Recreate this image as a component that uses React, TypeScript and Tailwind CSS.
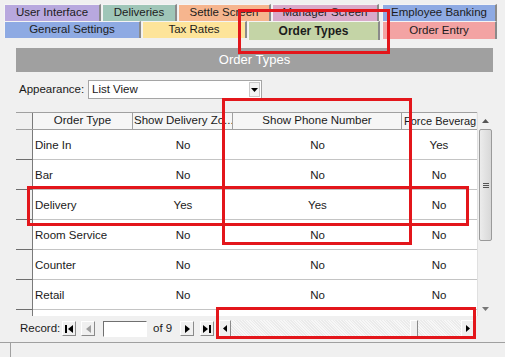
const font = { fontFamily: "'Liberation Sans', Arial, sans-serif" }

const Tab = ({ label, w, bg, ml, bold, h }: { label: string; w: string; bg: string; ml: string; bold?: boolean; h: string }) => (
  <div className={`${w} ${bg} ${ml} ${h} flex items-center justify-center border-t border-l border-t-[#f4f4f4] border-l-[#f4f4f4] border-r-2 border-r-[#8a8a8a] text-[11.5px] text-[#1c1c1c] ${bold ? "font-bold text-[12px]" : ""}`}>
    {label}
  </div>
)

const rows = [
  ["Dine In", "No", "No", "Yes"],
  ["Bar", "No", "No", "No"],
  ["Delivery", "Yes", "Yes", "No"],
  ["Room Service", "No", "No", "No"],
  ["Counter", "No", "No", "No"],
  ["Retail", "No", "No", "No"],
]

const NavBtn = ({ children, off }: { children: React.ReactNode; off?: boolean }) => (
  <div className={`w-[14px] h-[15px] flex items-center justify-center bg-[#f0f0f0] border border-t-white border-l-white border-r-[#8a8a8a] border-b-[#8a8a8a] ${off ? "text-[#a0a0a0]" : "text-black"}`}>
    {children}
  </div>
)

const App = () => {
  return (
    <div className="relative w-[505px] h-[357px] bg-[#f0f0f0] overflow-hidden text-[#1a1a1a]" style={font}>
      {/* tabs */}
      <div className="pt-[4px] pl-[4px]">
        <div className="flex">
          <Tab label="User Interface" w="w-[97px]" bg="bg-[#b8a8de]" ml="ml-0" h="h-[17px]" />
          <Tab label="Deliveries" w="w-[75px]" bg="bg-[#9fc6b8]" ml="ml-[1px]" h="h-[17px]" />
          <Tab label="Settle Screen" w="w-[93px]" bg="bg-[#f6b58e]" ml="ml-[1px]" h="h-[17px]" />
          <Tab label="Manager Screen" w="w-[107px]" bg="bg-[#d9a9c9]" ml="ml-[1px]" h="h-[17px]" />
          <Tab label="Employee Banking" w="w-[115px]" bg="bg-[#8eaae3]" ml="ml-[3px]" h="h-[17px]" />
        </div>
        <div className="flex items-start">
          <Tab label="General Settings" w="w-[137px]" bg="bg-[#8eaae3]" ml="ml-0" h="h-[17px]" />
          <Tab label="Tax Rates" w="w-[105px]" bg="bg-[#fde49a]" ml="ml-[1px]" h="h-[17px]" />
          <Tab label="Order Types" w="w-[132px]" bg="bg-[#c4d4a6]" ml="ml-[1px]" h="h-[19px]" bold />
          <Tab label="Order Entry" w="w-[115px]" bg="bg-[#f3a3a3]" ml="ml-[2px]" h="h-[18px]" />
        </div>
      </div>

      {/* title band */}
      <div className="mt-[8px] ml-[16px] w-[477px] h-[24px] bg-[#a0a0a0] flex items-center justify-center text-white text-[13px]">
        Order Types
      </div>

      {/* appearance */}
      <div className="mt-[8px] h-[19px] flex items-center pl-[19px]">
        <span className="text-[11.5px] w-[69px]">Appearance:</span>
        <div className="w-[174px] h-[19px] bg-white border border-[#a5a5a5] flex items-center">
          <span className="flex-1 pl-[3px] text-[11.5px]">List View</span>
          <div className="w-[11px] h-[15px] mr-[1px] border border-[#c8c8c8] bg-[#f3f3f3] flex items-center justify-center">
            <svg width="7" height="4" viewBox="0 0 7 4"><path d="M0 0h7L3.5 4z" fill="#000" /></svg>
          </div>
        </div>
      </div>

      {/* grid */}
      <div className="mt-[13px] ml-[16px] w-[477px] h-[204px] flex">
        <div className="w-[461px] flex flex-col border-t border-[#a0a0a0]">
          <div className="flex h-[17px] border-b border-[#a0a0a0] text-[11.5px]">
            <div className="w-[17px] border-r border-[#7a7a7a]" />
            <div className="w-[100px] bg-[#f6f6f6] border-r border-[#a0a0a0] flex items-center justify-center">Order Type</div>
            <div className="w-[100px] bg-[#f6f6f6] border-r border-[#a0a0a0] flex items-center pl-[1px] overflow-hidden whitespace-nowrap">Show Delivery Zo...</div>
            <div className="w-[169px] bg-[#f6f6f6] border-r border-[#a0a0a0] flex items-center justify-center">Show Phone Number</div>
            <div className="w-[74px] bg-[#f6f6f6] flex items-center pl-[2px] overflow-hidden whitespace-nowrap text-[11px]">Force Beverag</div>
          </div>
          {rows.map((r) => (
            <div key={r[0]} className="flex h-[30px] text-[11.5px]">
              <div className="w-[17px] border-b border-r border-b-[#6e6e6e] border-r-[#7a7a7a]" />
              <div className="flex flex-1 bg-white border-b border-[#c4c4c4] pt-[3px]">
                <div className="w-[100px] flex items-center pl-[2px]">{r[0]}</div>
                <div className="w-[100px] flex items-center justify-center">{r[1]}</div>
                <div className="w-[169px] flex items-center justify-center">{r[2]}</div>
                <div className="w-[74px] flex items-center justify-center">{r[3]}</div>
              </div>
            </div>
          ))}
          <div className="flex flex-1">
            <div className="w-[17px] border-r border-[#7a7a7a]" />
            <div className="flex-1 bg-white" />
          </div>
        </div>
        {/* vertical scrollbar */}
        <div className="w-[16px] flex flex-col bg-[#f0f0f0] border-l border-[#e0e0e0]">
          <div className="h-[17px] flex items-center justify-center">
            <svg width="7" height="4" viewBox="0 0 7 4"><path d="M0 4h7L3.5 0z" fill="#555" /></svg>
          </div>
          <div className="mx-[1px] h-[112px] rounded-[2px] border border-[#9a9a9a] bg-gradient-to-r from-[#ececec] to-[#d8d8d8] flex items-center justify-center">
            <div className="flex flex-col gap-[1px]">
              <div className="w-[6px] h-px bg-[#555]" />
              <div className="w-[6px] h-px bg-[#555]" />
              <div className="w-[6px] h-px bg-[#555]" />
            </div>
          </div>
          <div className="flex-1" />
          <div className="h-[14px] flex items-center justify-center">
            <svg width="7" height="4" viewBox="0 0 7 4"><path d="M0 0h7L3.5 4z" fill="#777" /></svg>
          </div>
        </div>
      </div>

      {/* record navigation */}
      <div className="h-[25px] flex items-center">
        <span className="ml-[20px] w-[42px] text-[11.5px]">Record:</span>
        <NavBtn>
          <svg width="8" height="8" viewBox="0 0 8 8"><path d="M0 0h2v8H0zM8 0v8L3 4z" fill="currentColor" /></svg>
        </NavBtn>
        <div className="w-[5px]" />
        <NavBtn off>
          <svg width="5" height="8" viewBox="0 0 5 8"><path d="M5 0v8L0 4z" fill="currentColor" /></svg>
        </NavBtn>
        <div className="ml-[8px] w-[44px] h-[16px] bg-white border border-t-[#707070] border-l-[#707070] border-r-white border-b-white" />
        <span className="ml-[6px] w-[27px] text-[11.5px]">of 9</span>
        <NavBtn>
          <svg width="5" height="8" viewBox="0 0 5 8"><path d="M0 0v8l5-4z" fill="currentColor" /></svg>
        </NavBtn>
        <div className="w-[6px]" />
        <NavBtn>
          <svg width="8" height="8" viewBox="0 0 8 8"><path d="M0 0v8l5-4zM6 0h2v8H6z" fill="currentColor" /></svg>
        </NavBtn>
        {/* horizontal scrollbar */}
        <div className="ml-[5px] w-[256px] h-[17px] flex bg-[repeating-linear-gradient(45deg,#ebebeb_0px,#ebebeb_1px,#f7f7f7_1px,#f7f7f7_2px)]">
          <div className="w-[12px] flex items-center justify-center bg-[#f0f0f0] border border-t-white border-l-white border-r-[#8a8a8a] border-b-[#8a8a8a]">
            <svg width="4" height="7" viewBox="0 0 4 7"><path d="M4 0v7L0 3.5z" fill="#000" /></svg>
          </div>
          <div className="ml-[179px] w-[8px] bg-[#f0f0f0] border border-t-white border-l-white border-r-[#8a8a8a] border-b-[#8a8a8a]" />
          <div className="flex-1" />
          <div className="w-[14px] flex items-center justify-center bg-[#f0f0f0] border border-t-white border-l-white border-r-[#8a8a8a] border-b-[#8a8a8a]">
            <svg width="4" height="7" viewBox="0 0 4 7"><path d="M0 0v7l4-3.5z" fill="#000" /></svg>
          </div>
        </div>
      </div>

      {/* status bar */}
      <div className="mt-[1px] border-t border-[#a0a0a0] h-[20px] flex">
        <div className="w-[11px] border-r border-[#a0a0a0]" />
      </div>

      {/* red annotation boxes */}
      <div className="absolute left-[238px] top-[9px] w-[152px] h-[45px] border-[3px] border-[#e3161b]" />
      <div className="absolute left-[222px] top-[98px] w-[190px] h-[147px] border-[3px] border-[#e3161b]" />
      <div className="absolute left-[27px] top-[186px] w-[442px] h-[40px] border-[3px] border-[#e3161b]" />
      <div className="absolute left-[216px] top-[307px] w-[260px] h-[32px] border-[3px] border-[#e3161b]" />
    </div>
  )
}

export default App
